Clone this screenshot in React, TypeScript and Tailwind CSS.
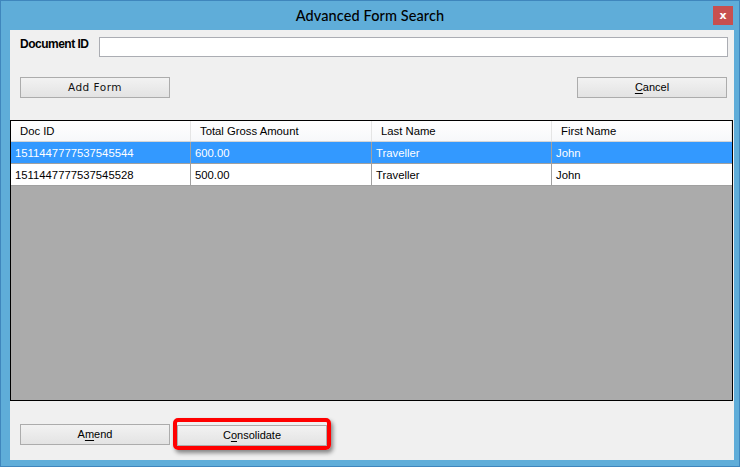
import React from 'react';

const rows = [
  { id: '1511447777537545544', amount: '600.00', last: 'Traveller', first: 'John', selected: true },
  { id: '1511447777537545528', amount: '500.00', last: 'Traveller', first: 'John', selected: false },
];

const cols = ['Doc ID', 'Total Gross Amount', 'Last Name', 'First Name'];

function WinButton({ children, className = '' }: { children: React.ReactNode; className?: string }) {
  return (
    <button className={`h-[21px] w-[150px] border border-[#acacac] bg-gradient-to-b from-[#f2f2f2] to-[#e3e3e3] text-[11px] text-black leading-none ${className}`}>
      {children}
    </button>
  );
}

export default function App() {
  return (
    <div className="w-[740px] h-[467px] bg-[#5fadd9] border border-[#3f86bd] flex flex-col overflow-hidden" style={{ fontFamily: '"Liberation Sans", Arial, sans-serif' }}>
      {/* title bar */}
      <div className="relative h-[29px] shrink-0 flex items-center justify-center">
        <span className="text-[14.5px] text-black tracking-[0.1px] font-medium" style={{ fontFamily: '"Segoe UI", Lato, sans-serif' }}>
          Advanced Form Search
        </span>
        <div className="absolute top-[5px] right-[6px] w-[20px] h-[19px] bg-[#c75050] flex items-center justify-center text-white text-[11px] font-bold leading-none" style={{ fontFamily: '"DejaVu Sans", sans-serif' }}>
          x
        </div>
      </div>

      {/* client area */}
      <div className="flex-1 ml-[9px] mr-[5px] mb-[6px] bg-[#f0f0f0] flex flex-col">
        <div className="flex items-start mt-[7px] pl-[10px] pr-[6px] h-[20px]">
          <span className="w-[79px] -mt-[2px] text-[12px] font-bold tracking-[-0.5px] text-black">Document ID</span>
          <div className="flex-1 h-[20px] border border-[#abadb3] bg-white" />
        </div>

        <div className="flex justify-between mt-[20px] pl-[10px] pr-[7px]">
          <WinButton className="tracking-[0.5px]">
            <span style={{ fontFamily: '"DejaVu Sans", sans-serif' }} className="text-[10.5px] font-medium text-[#111]">Add Form</span>
          </WinButton>
          <WinButton>
            <span className="underline underline-offset-[2px]">C</span>ancel
          </WinButton>
        </div>

        {/* grid */}
        <div className="mt-[22px] h-[281px] border border-black bg-[#ababab] flex flex-col text-[11.3px] mr-[1px]">
          <div className="grid grid-cols-[180px_181px_180px_1fr] h-[21px] bg-gradient-to-b from-white to-[#f7f8fa] border-b border-[#d5d5d5]">
            {cols.map((c) => (
              <div key={c} className="pl-[9px] flex items-center border-r border-[#e5e5e5] text-black">
                {c}
              </div>
            ))}
          </div>
          {rows.map((r) => (
            <div
              key={r.id}
              className={`grid grid-cols-[180px_181px_180px_1fr] h-[22px] border-b border-[#a0a0a0] ${r.selected ? 'bg-[#3399ff] text-white' : 'bg-white text-black'}`}
            >
              {[r.id, r.amount, r.last, r.first].map((v, i) => (
                <div key={i} className={`pl-[4px] pt-[1px] flex items-center ${i < 3 ? 'border-r border-[#a0a0a0]' : ''}`}>
                  {v}
                </div>
              ))}
            </div>
          ))}
        </div>

        {/* bottom buttons */}
        <div className="flex items-center mt-[21px] pl-[10px] gap-[3px]">
          <WinButton className="w-[149px]">
            A<span className="underline underline-offset-[2px]">m</span>end
          </WinButton>
          <div className="-my-[4px] border-[4px] border-[#ff0000] rounded-[5px] shadow-[2px_3px_4px_rgba(0,0,0,0.45)]">
            <WinButton className="w-[144px]">
              C<span className="underline underline-offset-[2px]">o</span>nsolidate
            </WinButton>
          </div>
        </div>
      </div>
    </div>
  );
}
